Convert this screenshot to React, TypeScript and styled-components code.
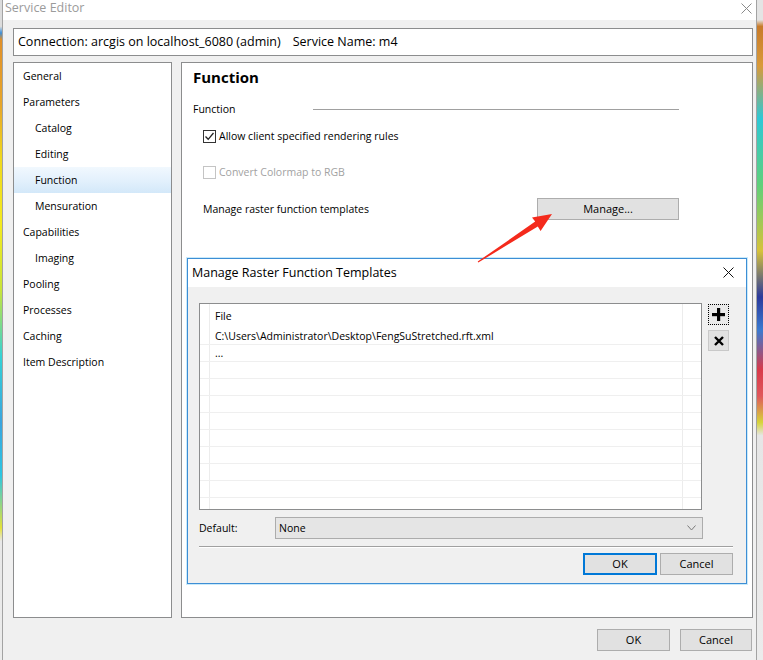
import React from "react";
import styled, { createGlobalStyle } from "styled-components";

const FONT = `"Open Sans", "Noto Sans", "DejaVu Sans", sans-serif`;

const GlobalStyle = createGlobalStyle`
  html, body { margin: 0; padding: 0; }
  body {
    width: 763px;
    height: 660px;
    overflow: hidden;
    background: #f0f0f0;
    font-family: ${FONT};
    color: #000;
  }
  * { box-sizing: border-box; }
`;

const Screen = styled.div`
  position: relative;
  display: flex;
  width: 763px;
  height: 660px;
`;

const DesktopStrip = styled.div<{ $w: number; $bg: string }>`
  flex: none;
  width: ${(p) => p.$w}px;
  background: ${(p) => p.$bg};
`;

const Window = styled.div`
  flex: 1;
  display: flex;
  flex-direction: column;
  background: #f0f0f0;
  border-left: 1px solid #a3a3a3;
  border-right: 1px solid #a3a3a3;
`;

const TitleBar = styled.div`
  height: 20px;
  flex: none;
  background: #fff;
  display: flex;
  align-items: flex-start;
  justify-content: space-between;
  padding: 0 4px 0 2px;
`;

const TitleText = styled.span`
  font-size: 12.5px;
  line-height: 16px;
  color: #9b9b9b;
`;

const TitleClose = styled.div`
  display: flex;
  padding-top: 3px;
`;

const CloseIcon = styled.svg<{ $color: string }>`
  display: block;
  flex: none;
  stroke: ${(p) => p.$color};
  stroke-width: 1;
  fill: none;
`;

const Body = styled.div`
  flex: 1;
  display: flex;
  flex-direction: column;
  padding: 8px 3px 0 10px;
`;

const ConnectionBar = styled.div`
  height: 28px;
  flex: none;
  background: #fff;
  border: 1px solid #8c8d8e;
  display: flex;
  align-items: center;
  padding: 0 0 1px 4px;
  font-size: 12.5px;
`;

const ConnPart = styled.span<{ $gap?: number }>`
  margin-left: ${(p) => p.$gap ?? 0}px;
  white-space: nowrap;
`;

const Main = styled.div`
  margin-top: 6px;
  height: 556px;
  flex: none;
  display: flex;
  gap: 9px;
`;

const Nav = styled.div`
  width: 159px;
  flex: none;
  background: #fff;
  border: 1px solid #8c8d8e;
  display: flex;
  flex-direction: column;
`;

const NavItem = styled.div<{ $sub?: boolean; $selected?: boolean }>`
  height: 26px;
  flex: none;
  display: flex;
  align-items: center;
  padding: 0 0 1px ${(p) => (p.$sub ? 21 : 9)}px;
  font-size: 10.5px;
  background: ${(p) =>
    p.$selected ? "linear-gradient(to bottom, #f1f8fe 0%, #e2f0fc 55%, #d3e8f9 100%)" : "transparent"};
`;

const Panel = styled.div`
  position: relative;
  flex: 1;
  background: #fff;
  border: 1px solid #8c8d8e;
  display: flex;
  flex-direction: column;
  padding: 0 73px 0 11px;
  font-size: 10.5px;
`;

const PanelTitle = styled.div`
  height: 27px;
  display: flex;
  align-items: center;
  font-size: 15px;
  font-weight: 700;
`;

const SectionRow = styled.div`
  margin-top: 9px;
  height: 20px;
  display: flex;
  align-items: center;
`;

const SectionLabel = styled.span`
  width: 120px;
  flex: none;
`;

const SectionLine = styled.div`
  flex: 1;
  height: 1px;
  background: #a0a0a0;
`;

const OptionRow = styled.div<{ $top: number; $h?: number }>`
  margin-top: ${(p) => p.$top}px;
  height: ${(p) => p.$h ?? 20}px;
  display: flex;
  align-items: center;
  justify-content: space-between;
  padding-left: 10px;
`;

const CheckLabel = styled.label<{ $disabled?: boolean }>`
  display: flex;
  align-items: center;
  gap: 3px;
  color: ${(p) => (p.$disabled ? "#a2a2a2" : "#000")};
`;

const Box = styled.span<{ $disabled?: boolean }>`
  width: 13px;
  height: 13px;
  flex: none;
  border: 1px solid ${(p) => (p.$disabled ? "#c4c4c4" : "#333")};
  background: #fff;
  display: flex;
  align-items: center;
  justify-content: center;
`;

const WinButton = styled.div<{ $w: number; $focused?: boolean }>`
  width: ${(p) => p.$w}px;
  height: 22px;
  flex: none;
  display: flex;
  align-items: center;
  justify-content: center;
  padding-bottom: 1px;
  background: #e1e1e1;
  border: ${(p) => (p.$focused ? "2px solid #0078d7" : "1px solid #adadad")};
  font-size: 11px;
`;

const Footer = styled.div`
  margin-top: 11px;
  display: flex;
  justify-content: flex-end;
  gap: 10px;
  padding-right: 1px;
`;

/* ---------- modal dialog ---------- */
const Dialog = styled.div`
  position: absolute;
  left: 5px;
  top: 195px;
  width: 560px;
  height: 326px;
  display: flex;
  flex-direction: column;
  border: 1px solid #3d8ed5;
  box-shadow: 0 0 0 1px rgba(180, 225, 248, 0.7);
  background: #f0f0f0;
`;

const DialogTitle = styled.div`
  height: 28px;
  flex: none;
  background: #fff;
  display: flex;
  align-items: center;
  justify-content: space-between;
  padding: 0 12px 2px 4px;
  font-size: 12.5px;
`;

const DialogBody = styled.div`
  flex: 1;
  display: flex;
  flex-direction: column;
  padding: 16px 13px 7px 11px;
`;

const ListArea = styled.div`
  display: flex;
  gap: 6px;
`;

const ListBox = styled.div`
  width: 503px;
  height: 207px;
  flex: none;
  background: #fff;
  border: 1px solid #8c8d8e;
  display: flex;
  flex-direction: column;
  overflow: hidden;
`;

const GridRow = styled.div<{ $h: number; $lined?: boolean }>`
  height: ${(p) => p.$h}px;
  flex: none;
  display: grid;
  grid-template-columns: 10px 1fr 18px;
  border-bottom: ${(p) => (p.$lined ? "1px solid #efefef" : "none")};
`;

const GridCell = styled.div<{ $edge?: boolean }>`
  display: flex;
  align-items: center;
  padding-left: 5px;
  border-right: ${(p) => (p.$edge ? "none" : "1px solid #ececec")};
  white-space: nowrap;
  font-size: 10.5px;
`;

const SideButtons = styled.div`
  display: flex;
  flex-direction: column;
  gap: 5px;
  padding-top: 1px;
`;

const IconButton = styled.div<{ $focused?: boolean }>`
  width: 21px;
  height: 21px;
  display: flex;
  align-items: center;
  justify-content: center;
  background: ${(p) => (p.$focused ? "#e9e9e9" : "#e1e1e1")};
  border: ${(p) => (p.$focused ? "1px dotted #000" : "1px solid #c9c9c9")};
`;

const DefaultRow = styled.div`
  margin-top: 7px;
  height: 22px;
  display: flex;
  align-items: center;
  font-size: 10.5px;
`;

const DefaultLabel = styled.span`
  width: 76px;
  flex: none;
`;

const Combo = styled.div`
  width: 428px;
  height: 22px;
  display: flex;
  align-items: center;
  justify-content: space-between;
  padding: 0 6px 1px 3px;
  background: #e5e5e5;
  border: 1px solid #acacac;
`;

const Separator = styled.div`
  margin-top: 7px;
  height: 1px;
  background: #a0a0a0;
  box-shadow: 0 1px 0 #fff;
`;

const DialogButtons = styled.div`
  margin-top: 6px;
  display: flex;
  justify-content: flex-end;
  gap: 3px;
`;

const Arrow = styled.svg`
  position: absolute;
  left: 470px;
  top: 200px;
  pointer-events: none;
`;

const navItems = [
  { label: "General" },
  { label: "Parameters" },
  { label: "Catalog", sub: true },
  { label: "Editing", sub: true },
  { label: "Function", sub: true, selected: true },
  { label: "Mensuration", sub: true },
  { label: "Capabilities" },
  { label: "Imaging", sub: true },
  { label: "Pooling" },
  { label: "Processes" },
  { label: "Caching" },
  { label: "Item Description" },
];

const listRows = ["C:\\Users\\Administrator\\Desktop\\FengSuStretched.rft.xml", "...", "", "", "", "", "", "", "", "", ""];

const leftStrip =
  "linear-gradient(to bottom, #dcdcdc 0%, #dcdcdc 4%, #3d8fd8 5%, #e0902a 6%, #e7a62a 16%, #f0d81c 24%, #f4ea1e 34%, #c8e43a 44%, #34d2d6 54%, #3aa4de 64%, #2cc6e2 72%, #e4e23a 80%, #e8e8e8 82%, #ececec 100%)";
const rightStrip =
  "linear-gradient(to bottom, #e4e4e4 0%, #e4e4e4 3%, #c87b2a 4%, #d99a3a 10%, #2ec8d6 18%, #5fd07a 28%, #d6c23a 38%, #2b3a9c 45%, #3a7ad0 50%, #d83a4a 56%, #e0585c 60%, #d6d43a 64%, #e6e6e6 66%, #ececec 100%)";

function CloseGlyph({ size, color }: { size: number; color: string }) {
  return (
    <CloseIcon $color={color} width={size} height={size} viewBox={`0 0 ${size} ${size}`}>
      <line x1="0.5" y1="0.5" x2={size - 0.5} y2={size - 0.5} />
      <line x1={size - 0.5} y1="0.5" x2="0.5" y2={size - 0.5} />
    </CloseIcon>
  );
}

export default function App() {
  return (
    <>
      <GlobalStyle />
      <Screen>
        <DesktopStrip $w={2} $bg={leftStrip} />
        <Window>
          <TitleBar>
            <TitleText>Service Editor</TitleText>
            <TitleClose>
              <CloseGlyph size={11} color="#8a8a8a" />
            </TitleClose>
          </TitleBar>
          <Body>
            <ConnectionBar>
              <ConnPart>Connection: arcgis on localhost_6080 (admin)</ConnPart>
              <ConnPart $gap={12}>Service Name: m4</ConnPart>
            </ConnectionBar>
            <Main>
              <Nav>
                {navItems.map((n) => (
                  <NavItem key={n.label} $sub={n.sub} $selected={n.selected}>
                    {n.label}
                  </NavItem>
                ))}
              </Nav>
              <Panel>
                <PanelTitle>Function</PanelTitle>
                <SectionRow>
                  <SectionLabel>Function</SectionLabel>
                  <SectionLine />
                </SectionRow>
                <OptionRow $top={7}>
                  <CheckLabel>
                    <Box>
                      <svg width="11" height="11" viewBox="0 0 11 11">
                        <polyline points="1.5,5.5 4.2,8.3 9.5,2" fill="none" stroke="#222" strokeWidth="1.3" />
                      </svg>
                    </Box>
                    Allow client specified rendering rules
                  </CheckLabel>
                </OptionRow>
                <OptionRow $top={16}>
                  <CheckLabel $disabled>
                    <Box $disabled />
                    Convert Colormap to RGB
                  </CheckLabel>
                </OptionRow>
                <OptionRow $top={16} $h={22}>
                  <span>Manage raster function templates</span>
                  <WinButton $w={142}>Manage...</WinButton>
                </OptionRow>

                <Dialog>
                  <DialogTitle>
                    <span>Manage Raster Function Templates</span>
                    <CloseGlyph size={11} color="#111" />
                  </DialogTitle>
                  <DialogBody>
                    <ListArea>
                      <ListBox>
                        <GridRow $h={24}>
                          <GridCell />
                          <GridCell>File</GridCell>
                          <GridCell $edge />
                        </GridRow>
                        {listRows.map((r, i) => (
                          <GridRow key={i} $h={17} $lined>
                            <GridCell />
                            <GridCell>{r}</GridCell>
                            <GridCell $edge />
                          </GridRow>
                        ))}
                      </ListBox>
                      <SideButtons>
                        <IconButton $focused>
                          <svg width="13" height="13" viewBox="0 0 13 13">
                            <rect x="5" y="0" width="3.2" height="13" fill="#000" />
                            <rect x="0" y="5" width="13" height="3.2" fill="#000" />
                          </svg>
                        </IconButton>
                        <IconButton>
                          <svg width="10" height="10" viewBox="0 0 10 10">
                            <path d="M1 1 L9 9 M9 1 L1 9" stroke="#000" strokeWidth="2.4" />
                          </svg>
                        </IconButton>
                      </SideButtons>
                    </ListArea>
                    <DefaultRow>
                      <DefaultLabel>Default:</DefaultLabel>
                      <Combo>
                        <span>None</span>
                        <svg width="9" height="6" viewBox="0 0 9 6">
                          <polyline points="0.5,0.5 4.5,5 8.5,0.5" fill="none" stroke="#7a7a7a" strokeWidth="1" />
                        </svg>
                      </Combo>
                    </DefaultRow>
                    <Separator />
                    <DialogButtons>
                      <WinButton $w={74} $focused>
                        OK
                      </WinButton>
                      <WinButton $w={73}>Cancel</WinButton>
                    </DialogButtons>
                  </DialogBody>
                </Dialog>
              </Panel>
            </Main>
            <Footer>
              <WinButton $w={73}>OK</WinButton>
              <WinButton $w={72}>Cancel</WinButton>
            </Footer>
          </Body>
        </Window>
        <DesktopStrip $w={6} $bg={rightStrip} />
        <Arrow width="100" height="70" viewBox="0 0 100 70">
          <polygon
            points="8.3,62.6 67.8,26.5 70.6,31 82,14 62,17.5 65.2,21.6 7.7,61.6"
            fill="#f42a1c"
          />
        </Arrow>
      </Screen>
    </>
  );
}
